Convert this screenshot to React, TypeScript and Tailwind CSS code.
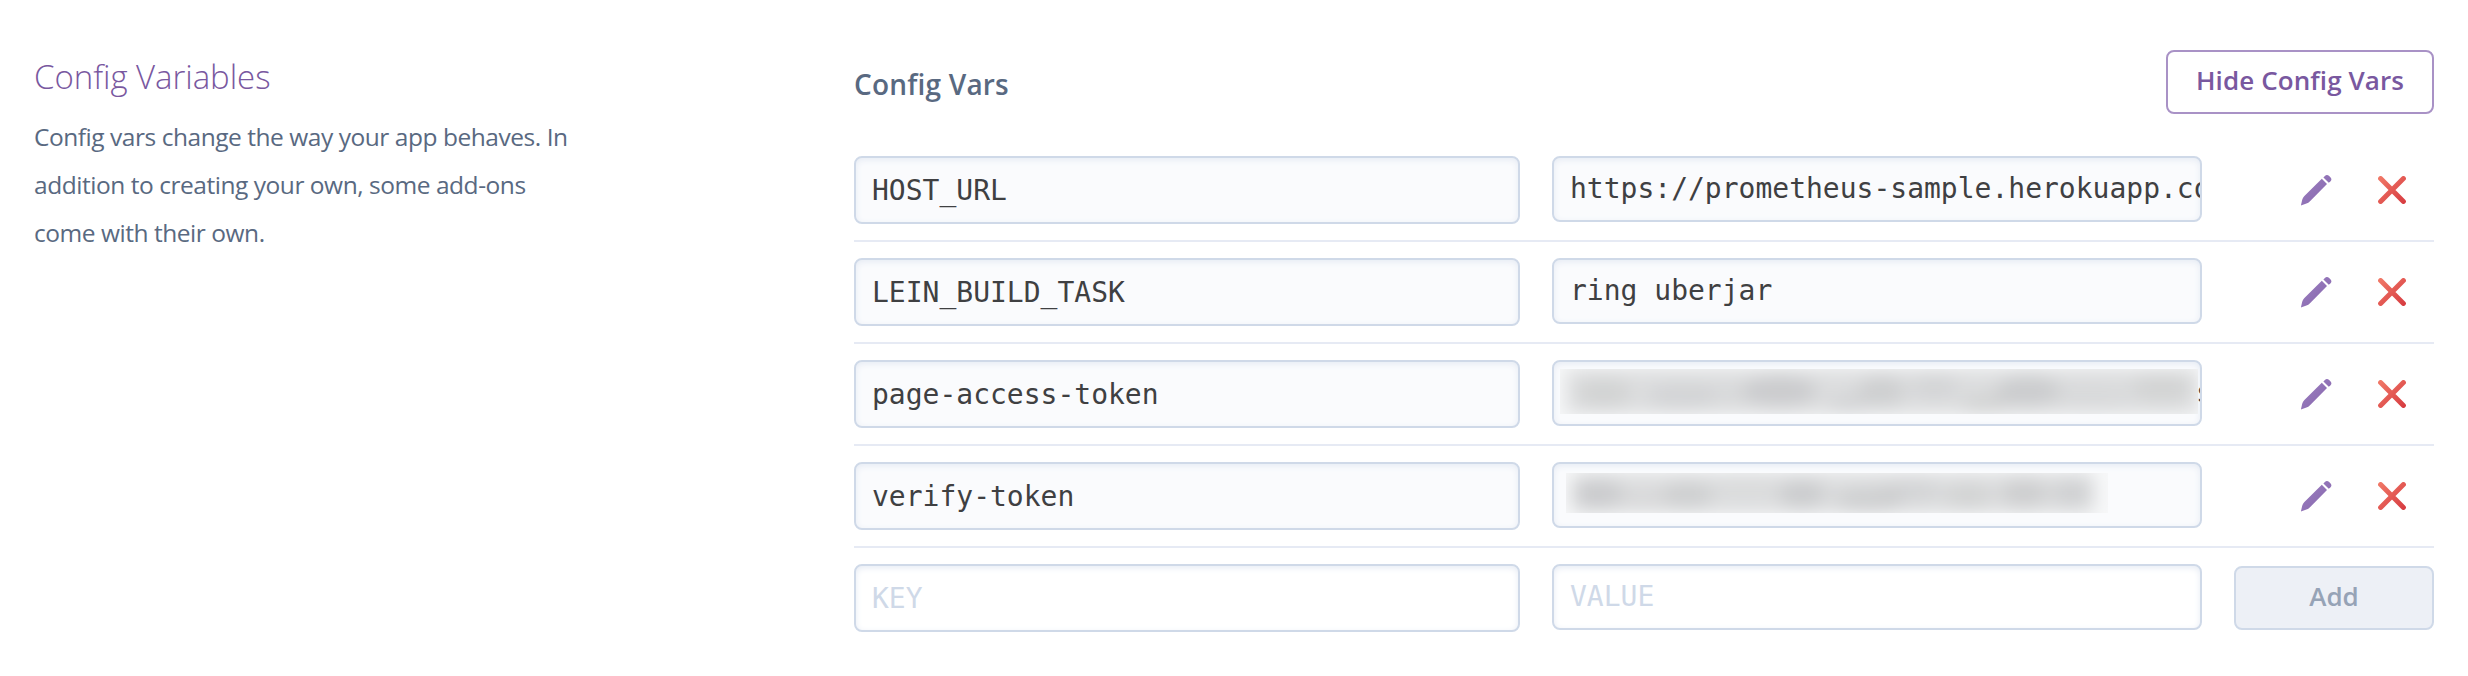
const ROWS = [
  { key: "HOST_URL", value: "https://prometheus-sample.herokuapp.com/" },
  { key: "LEIN_BUILD_TASK", value: "ring uberjar" },
  { key: "page-access-token", redacted: "long" },
  { key: "verify-token", redacted: "short" },
];

const FIELD =
  "overflow-hidden whitespace-nowrap rounded-[8px] border-2 border-[#cfd9e8] pl-4 font-['DejaVu_Sans_Mono',monospace] text-[28px] leading-8 shadow-[inset_0_2px_6px_#e6ebf4]";

type Blob = [number, number, number, number, number];

const LONG: Blob[] = [
  [44, 24, 28, 14, 0.12], [120, 27, 34, 11, 0.11], [165, 25, 30, 10, 0.05], [220, 22, 38, 15, 0.2],
  [288, 34, 20, 10, 0.1], [322, 22, 24, 15, 0.16], [375, 18, 24, 12, 0.1], [425, 34, 24, 10, 0.12],
  [468, 22, 32, 15, 0.19], [530, 26, 40, 11, 0.05], [602, 19, 32, 13, 0.12],
];

const SHORT: Blob[] = [
  [32, 21, 26, 14, 0.2], [80, 26, 26, 9, 0.06], [122, 22, 26, 13, 0.16], [180, 14, 36, 10, 0.03],
  [236, 21, 24, 14, 0.19], [302, 27, 34, 12, 0.16], [345, 18, 30, 12, 0.1], [402, 23, 24, 12, 0.12],
  [458, 20, 24, 14, 0.17], [506, 20, 20, 13, 0.14],
];

function Smudge({ width, height, inset, blobs }: { width: number; height: number; inset: number; blobs: Blob[] }) {
  const id = `smudge-${width}`;
  return (
    <svg width={width} height={height} viewBox={`0 0 ${width} ${height}`} className="block shrink-0 bg-[#f7f8f9]">
      <defs>
        <filter id={id} x="-20%" y="-100%" width="140%" height="300%">
          <feGaussianBlur stdDeviation="9" />
        </filter>
      </defs>
      <g filter={`url(#${id})`}>
        <rect x="6" y="0" width={width - 6 - inset} height={height} fill="#dddedf" />
        {blobs.map(([cx, cy, rx, ry, o]) => (
          <ellipse key={cx} cx={cx} cy={cy} rx={rx} ry={ry} fill="#808285" opacity={o} />
        ))}
      </g>
    </svg>
  );
}

function Pencil() {
  return (
    <svg width="32" height="32" viewBox="0 0 32 32">
      <defs>
        <linearGradient id="pencil" x1="0" y1="0" x2="1" y2="1">
          <stop offset="0" stopColor="#9d7fc0" />
          <stop offset="1" stopColor="#8566ad" />
        </linearGradient>
      </defs>
      <path
        fill="url(#pencil)"
        d="M0.9 31.4 L2.2 25.8 Q2.8 23.6 4.4 22 L21.8 4.8 L27 10 L10 27.2 Q8.4 28.8 6.4 29.6 Z M23.4 3.4 L24.9 1.9 Q27 0.2 29.4 2.2 L30.2 3 Q32.4 5.2 30.6 7.2 L28.8 8.8 Z"
      />
    </svg>
  );
}

function Cross() {
  return (
    <svg width="28" height="28" viewBox="0 0 28 28">
      <defs>
        <linearGradient id="cross" gradientUnits="userSpaceOnUse" x1="0" y1="0" x2="28" y2="28">
          <stop offset="0" stopColor="#f27b69" />
          <stop offset="1" stopColor="#d6393f" />
        </linearGradient>
      </defs>
      <path d="M2.6 2.6 L25.4 25.4 M25.4 2.6 L2.6 25.4" stroke="url(#cross)" strokeWidth="5" strokeLinecap="round" />
    </svg>
  );
}

export default function App() {
  return (
    <main className="flex h-[676px] w-[2468px] bg-white font-['Open_Sans',sans-serif] text-[#596981]">
      <section className="w-[854px] pl-[34px] pt-[53px]">
        <h2 className="whitespace-nowrap text-[33px] font-light leading-[48px] tracking-[-0.05px] text-[#79589f]">
          Config Variables
        </h2>
        <p className="mt-3 whitespace-nowrap text-[24.5px] leading-[48px] tracking-[-0.46px]">
          Config vars change the way your app behaves. In
          <br />
          addition to creating your own, some add-ons
          <br />
          come with their own.
        </p>
      </section>
      <section className="w-[1580px] pt-[50px]">
        <header className="flex justify-between">
          <h3 className="mt-[14px] h-10 whitespace-nowrap text-[28px] font-semibold leading-10 tracking-[0.2px]">
            Config Vars
          </h3>
          <button className="h-16 w-[268px] whitespace-nowrap rounded-[8px] border-2 border-[#a992c6] pb-1 text-[26px] font-semibold leading-8 tracking-[0.1px] text-[#79589f]">
            Hide Config Vars
          </button>
        </header>
        <div className="mt-[42px]">
          {ROWS.map((r) => (
            <div key={r.key} className="mb-4 flex h-[86px] items-start border-b-2 border-[#e6eaf4] text-[#3f4042]">
              <div className={`${FIELD} h-[68px] w-[666px] bg-[#fafbfd] pt-[17px]`}>{r.key}</div>
              {r.redacted ? (
                <div className={`${FIELD} ml-8 h-[66px] w-[650px] bg-[#fafbfd]`}>
                  {r.redacted === "long" ? (
                    <div className="-ml-[10px] flex pt-[7px]">
                      <Smudge width={638} height={45} inset={0} blobs={LONG} />
                      <span className="-ml-[2px] pt-2">s</span>
                    </div>
                  ) : (
                    <div className="-ml-1 pt-[9px]">
                      <Smudge width={542} height={40} inset={14} blobs={SHORT} />
                    </div>
                  )}
                </div>
              ) : (
                <div className={`${FIELD} ml-8 h-[66px] w-[650px] bg-[#fafbfd] pt-[15px]`}>{r.value}</div>
              )}
              <div className="ml-[98px] flex items-center pt-[18px]">
                <Pencil />
                <div className="ml-[46px]">
                  <Cross />
                </div>
              </div>
            </div>
          ))}
          <div className="flex items-start text-[#cfd9e8]">
            <div className={`${FIELD} h-[68px] w-[666px] pt-[17px]`}>KEY</div>
            <div className={`${FIELD} ml-8 h-[66px] w-[650px] pt-[15px]`}>VALUE</div>
            <button className="ml-8 mt-[2px] h-16 w-[200px] rounded-[8px] border-2 border-[#cfd9e8] bg-[#edf0f6] pb-1 text-[26px] font-semibold leading-8 text-[#96a3b6]">
              Add
            </button>
          </div>
        </div>
      </section>
    </main>
  );
}
